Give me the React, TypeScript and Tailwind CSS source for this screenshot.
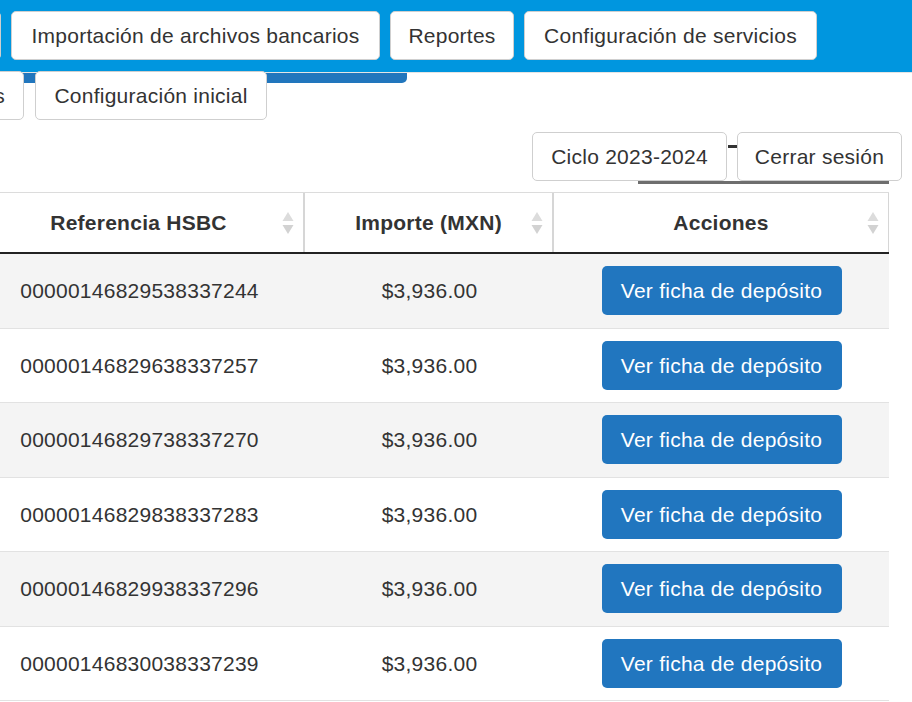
import React from "react";

const rows = [
  "00000146829538337244",
  "00000146829638337257",
  "00000146829738337270",
  "00000146829838337283",
  "00000146829938337296",
  "00000146830038337239",
];

function SortIcon() {
  return (
    <svg width="14" height="24" viewBox="0 0 14 24" className="absolute right-[8px] top-1/2 -translate-y-1/2">
      <path d="M7 1 L12.5 10 L1.5 10 Z" fill="#dcdcdc" />
      <path d="M7 23 L12.5 14 L1.5 14 Z" fill="#d2d2d2" />
    </svg>
  );
}

const navBtn =
  "h-[49px] shrink-0 rounded-[5px] border border-[#cfcfcf] bg-white text-[21px] text-[#333] flex items-center justify-center whitespace-nowrap";

export default function App() {
  return (
    <div className="w-[912px] h-[702px] overflow-hidden bg-white tracking-[0.25px] font-['Liberation_Sans',Arial,sans-serif]">
      {/* top blue bar */}
      <div className="h-[73px] bg-[#0096DF] pt-[11px] border-b border-[#e4e4e4]">
        <div className="flex gap-[10px] -ml-[99px]">
          <div className={`${navBtn} w-[100px]`} />
          <div className={`${navBtn} w-[369px]`}>Importación de archivos bancarios</div>
          <div className={`${navBtn} w-[124px]`}>Reportes</div>
          <div className={`${navBtn} w-[293px]`}>Configuración de servicios</div>
        </div>
      </div>
      {/* dark strip + second row */}
      <div className="h-[10px] w-[407px] bg-[#2176BD] rounded-br-[5px]" />
      <div className="flex gap-[11px] -mt-[12px] -ml-[96px]">
        <div className={`${navBtn} w-[120px] !justify-end pr-[18px]`}>Alumnos</div>
        <div className={`${navBtn} w-[232px]`}>Configuración inicial</div>
      </div>
      {/* session row */}
      <div className="flex justify-end pr-[10px] mt-[12px]">
        <div className={`${navBtn} w-[195px]`}>Ciclo 2023-2024</div>
        <div className="w-[10px] flex justify-end pt-[13px]">
          <div className="w-[9px] h-[3px] bg-[#333]" />
        </div>
        <div className={`${navBtn} w-[165px]`}>Cerrar sesión</div>
      </div>
      <div className="h-[3px] w-[251px] bg-[#6e6e6e] ml-[638px]" />
      {/* table */}
      <div className="mt-[8px] -ml-[26px] w-[915px] text-[#333]">
        <div className="grid grid-cols-[331px_249px_335px] h-[62px] border-t border-[#dcdcdc] border-b-2 border-b-[#222]">
          <div className="relative flex items-center justify-center font-bold text-[21px] border-r-2 border-[#d6d6d6]">
            Referencia HSBC
            <SortIcon />
          </div>
          <div className="relative flex items-center justify-center font-bold text-[21px] border-r-2 border-[#d6d6d6]">
            Importe (MXN)
            <SortIcon />
          </div>
          <div className="relative flex items-center justify-center font-bold text-[21px] border-r border-[#d6d6d6]">
            Acciones
            <SortIcon />
          </div>
        </div>
        {rows.map((r, i) => (
          <div
            key={r}
            className={`grid grid-cols-[331px_249px_335px] h-[74.5px] border-b border-[#e2e2e2] text-[21px] ${
              i % 2 === 0 ? "bg-[#f4f4f4]" : "bg-white"
            }`}
          >
            <div className="flex items-center justify-center">{r}</div>
            <div className="flex items-center justify-center">$3,936.00</div>
            <div className="flex items-center justify-center">
              <div className="w-[240px] h-[49px] rounded-[5px] bg-[#2176BF] text-white flex items-center justify-center">
                Ver ficha de depósito
              </div>
            </div>
          </div>
        ))}
      </div>
    </div>
  );
}
